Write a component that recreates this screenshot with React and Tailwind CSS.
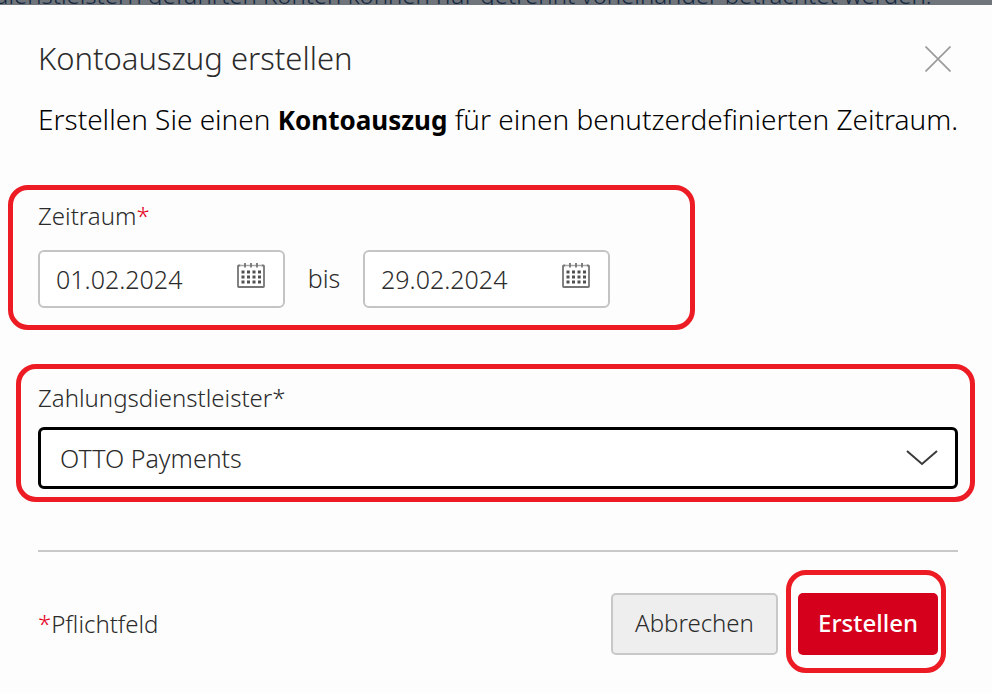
import React, { useState } from 'react';

function CloseIcon() {
  return (
    <svg width="26" height="26" viewBox="0 0 26 26" fill="none" stroke="#9b9b9b" strokeWidth="1.7">
      <path d="M0.5 0.5 25.5 25.5M25.5 0.5 0.5 25.5" />
    </svg>
  );
}

function CalendarIcon() {
  const columns = [5.5, 11, 16.5, 22];
  const rows = [8.5, 13.5, 18.5];

  return (
    <svg width="28" height="25" viewBox="0 0 28 25" fill="none">
      <path d="M3.5 2.5H1.7a.7.7 0 0 0-.7.7V23.3a.7.7 0 0 0 .7.7H26.3a.7.7 0 0 0 .7-.7V3.2a.7.7 0 0 0-.7-.7H24.5" stroke="#757575" strokeWidth="1.8" />
      <path d="M3.5 2.5H24.5" stroke="#a5a5a5" strokeWidth="1.4" />
      <path d="M8 0V4.5M14 0V4.5M20 0V4.5" stroke="#757575" strokeWidth="1.8" />
      {rows.map((y) => columns.map((x) => (
        <rect key={`${x}-${y}`} x={x - 1} y={y - 1} width="3" height="3" fill="#505050" />
      )))}
    </svg>
  );
}

function DateField({ id, label, value, onChange }) {
  return (
    <div className="relative w-[247px]">
      <input
        id={id}
        type="text"
        aria-label={label}
        value={value}
        onChange={(e) => onChange(e.target.value)}
        className="block w-full h-[58px] pl-4 pr-14 text-[25px] leading-9 font-light text-[#2b2b2b] bg-white border-2 border-[#c4c4c4] rounded-md"
      />
      <button type="button" aria-label="Kalender" className="absolute right-5 top-[13px]">
        <CalendarIcon />
      </button>
    </div>
  );
}

export default function App() {
  const [from, setFrom] = useState('01.02.2024');
  const [to, setTo] = useState('29.02.2024');
  const [provider, setProvider] = useState('OTTO Payments');

  return (
    <div className="min-h-screen bg-[#fdfdfd] font-['Noto_Sans',sans-serif] font-light text-[#2b2b2b]">
      {/* Dimmed page behind the dialog */}
      <div className="flex items-end h-[5px] overflow-hidden bg-[#70757c] text-[#14283f]">
        <p className="-ml-1.5 whitespace-nowrap text-2xl leading-5">
          dienstleistern geführten Konten können nur getrennt voneinander betrachtet werden.
        </p>
      </div>

      <div role="dialog" aria-labelledby="dialog-title">
        {/* Header */}
        <div className="flex items-center justify-between pt-8 pl-[38px] pr-[41px]">
          <h1 id="dialog-title" className="pb-0.5 text-[31px] leading-[42px]">Kontoauszug erstellen</h1>
          <button type="button" aria-label="Schließen">
            <CloseIcon />
          </button>
        </div>
        <p className="pt-[18px] pl-[38px] text-[28px] leading-10 text-black whitespace-nowrap">
          Erstellen Sie einen <strong className="text-[26px] font-bold">Kontoauszug</strong> für einen benutzerdefinierten Zeitraum.
        </p>

        <form onSubmit={(e) => e.preventDefault()}>
          {/* Date range */}
          <div className="mt-[45px] ml-2 w-[687px] max-w-full border-5 border-[#ed1c24] rounded-[20px] pt-2 pb-[17px] pl-[25px]">
            <label htmlFor="date-from" className="block text-2xl leading-9">
              Zeitraum<span className="text-[#e3001b]">*</span>
            </label>
            <div className="flex items-center mt-4">
              <DateField id="date-from" label="Zeitraum von" value={from} onChange={setFrom} />
              <span className="w-[78px] text-center text-[25px]">bis</span>
              <DateField id="date-to" label="Zeitraum bis" value={to} onChange={setTo} />
            </div>
          </div>

          {/* Payment provider */}
          <div className="mt-[34px] ml-4 mr-[17px] border-5 border-[#ed1c24] rounded-[20px] pt-[11px] pb-2 pl-[17px] pr-3">
            <label htmlFor="provider" className="block text-2xl leading-9">Zahlungsdienstleister*</label>
            <div className="relative mt-[11px]">
              <select
                id="provider"
                value={provider}
                onChange={(e) => setProvider(e.target.value)}
                className="block w-full h-[62px] appearance-none pl-[19px] pr-16 text-[25px] leading-9 bg-white border-3 border-black rounded-md"
              >
                <option>OTTO Payments</option>
              </select>
              <svg className="absolute right-5 top-[23px] pointer-events-none" width="32" height="16" viewBox="0 0 32 16" fill="none" stroke="#3a3a3a" strokeWidth="2">
                <path d="M1 1 16 14 31 1" />
              </svg>
            </div>
          </div>

          <hr className="mt-12 ml-[38px] mr-[34px] border-t-2 border-[#c8c8c8]" />

          {/* Footer */}
          <div className="flex items-end justify-between mt-[18px] pl-[38px] pr-[46px]">
            <p className="pb-[33px] text-2xl leading-8">
              <span className="text-[#e3001b]">*</span>Pflichtfeld
            </p>
            <div className="flex items-end gap-2">
              <button type="button" className="w-[167px] h-[62px] mb-[18px] pb-0.5 text-2xl bg-[#eeeeee] border-2 border-[#c8c8c8] rounded-[5px]">
                Abbrechen
              </button>
              <div className="border-5 border-[#ed1c24] rounded-[20px] pt-[18px] pb-[13px] pl-[7px] pr-[3px]">
                <button type="submit" className="block w-[140px] h-[62px] pb-0.5 text-2xl font-medium text-white bg-[#d5001c] rounded-[5px]">
                  Erstellen
                </button>
              </div>
            </div>
          </div>
        </form>
      </div>
    </div>
  );
}
